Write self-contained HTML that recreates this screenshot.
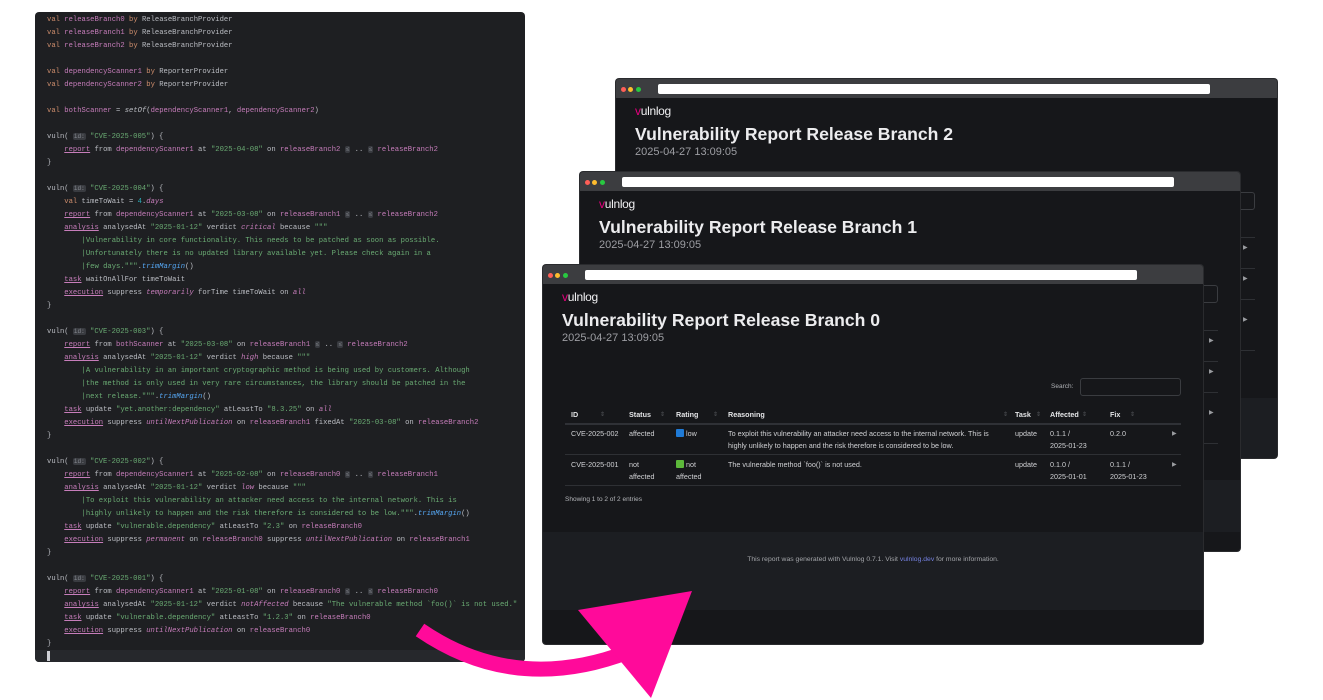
<!DOCTYPE html>
<html><head><meta charset="utf-8">
<style>
*{margin:0;padding:0;box-sizing:border-box}
body{width:1323px;height:700px;background:#fff;position:relative;overflow:hidden;font-family:"Liberation Sans",sans-serif}
.code{position:absolute;left:35px;top:12px;width:490px;height:650px;background:#1e1f22;border-radius:4px;overflow:hidden}
.code pre{position:absolute;left:12px;top:2px;font-family:"Liberation Mono",monospace;font-size:7.2px;line-height:13px;color:#bcbec4;white-space:pre}
.k{color:#cf8e6d}.p{color:#c77dbb}.s{color:#6aab73}.n{color:#2aacb8}.f{color:#56a8f5;font-style:italic}.i{font-style:italic}.pi{color:#c77dbb;font-style:italic}
.u{text-decoration:underline;color:#c77dbb}
.h{background:#393b40;color:#868a91;border-radius:2px;padding:0 1px;font-size:6px;line-height:0}
.sb{position:absolute;left:0;bottom:0;width:100%;height:12px;background:#26282c}
.cur{position:absolute;left:12px;bottom:1px;width:3px;height:10px;background:#ced0d6}
.win{position:absolute;width:660px;height:379px;background:#16171a;border-radius:3px;overflow:hidden;box-shadow:0 0 0 1px #2a2b2e}
.tb{position:absolute;left:0;top:0;width:100%;height:19px;background:#3c3d40}
.dot{position:absolute;top:8px;width:5px;height:5px;border-radius:50%}
.url{position:absolute;left:42px;top:5px;width:552px;height:10px;background:#fff;border-radius:2px}
.logo{position:absolute;left:19px;top:25px;font-size:12px;color:#f0f0f2;letter-spacing:-0.3px}
.logo b{color:#e6007e;font-weight:normal}
.ttl{position:absolute;left:19px;top:45px;font-size:17.6px;font-weight:bold;color:#ececee;white-space:nowrap}
.dt{position:absolute;left:19px;top:67px;font-size:11px;color:#9d9ea3}
.sl{position:absolute;left:508px;top:118px;font-size:6.5px;color:#b0b2b6}
.si{position:absolute;left:537px;top:113px;width:101px;height:18px;border:1px solid #3a3c40;border-radius:3px}
.t{position:absolute;font-size:7.2px;color:#d0d1d4;line-height:11.5px;white-space:nowrap}
.th{font-weight:bold;color:#e4e5e7}
.ln{position:absolute;left:22px;width:616px;height:1px;background:#2e3034}
.ar{position:absolute;left:629px;font-size:6px;color:#9a9ca0}
.sq{display:inline-block;width:8px;height:8px;vertical-align:-1px;margin-right:2px;border-radius:1px}
.so{position:absolute;font-size:6px;color:#55575c}
.ft{position:absolute;left:0;width:100%;background:#1c1e22}
.ftx{position:absolute;left:0;width:100%;text-align:center;font-size:6.8px;color:#a3a5a9}
.ftx a{color:#7480e0;text-decoration:none}
</style></head><body>

<div class="code"><pre><span class="k">val</span> <span class="p">releaseBranch0</span> <span class="k">by</span> ReleaseBranchProvider
<span class="k">val</span> <span class="p">releaseBranch1</span> <span class="k">by</span> ReleaseBranchProvider
<span class="k">val</span> <span class="p">releaseBranch2</span> <span class="k">by</span> ReleaseBranchProvider

<span class="k">val</span> <span class="p">dependencyScanner1</span> <span class="k">by</span> ReporterProvider
<span class="k">val</span> <span class="p">dependencyScanner2</span> <span class="k">by</span> ReporterProvider

<span class="k">val</span> <span class="p">bothScanner</span> = <span class="i">setOf</span>(<span class="p">dependencyScanner1</span>, <span class="p">dependencyScanner2</span>)

vuln( <span class="h">id:</span> <span class="s">"CVE-2025-005"</span>) {
    <span class="u">report</span> from <span class="p">dependencyScanner1</span> at <span class="s">"2025-04-08"</span> on <span class="p">releaseBranch2</span> <span class="h">≤</span> .. <span class="h">≤</span> <span class="p">releaseBranch2</span>
}

vuln( <span class="h">id:</span> <span class="s">"CVE-2025-004"</span>) {
    <span class="k">val</span> timeToWait = <span class="n">4</span>.<span class="pi">days</span>
    <span class="u">report</span> from <span class="p">dependencyScanner1</span> at <span class="s">"2025-03-08"</span> on <span class="p">releaseBranch1</span> <span class="h">≤</span> .. <span class="h">≤</span> <span class="p">releaseBranch2</span>
    <span class="u">analysis</span> analysedAt <span class="s">"2025-01-12"</span> verdict <span class="pi">critical</span> because <span class="s">"""</span>
<span class="s">        |Vulnerability in core functionality. This needs to be patched as soon as possible.</span>
<span class="s">        |Unfortunately there is no updated library available yet. Please check again in a</span>
<span class="s">        |few days."""</span>.<span class="f">trimMargin</span>()
    <span class="u">task</span> waitOnAllFor timeToWait
    <span class="u">execution</span> suppress <span class="pi">temporarily</span> forTime timeToWait on <span class="pi">all</span>
}

vuln( <span class="h">id:</span> <span class="s">"CVE-2025-003"</span>) {
    <span class="u">report</span> from <span class="p">bothScanner</span> at <span class="s">"2025-03-08"</span> on <span class="p">releaseBranch1</span> <span class="h">≤</span> .. <span class="h">≤</span> <span class="p">releaseBranch2</span>
    <span class="u">analysis</span> analysedAt <span class="s">"2025-01-12"</span> verdict <span class="pi">high</span> because <span class="s">"""</span>
<span class="s">        |A vulnerability in an important cryptographic method is being used by customers. Although</span>
<span class="s">        |the method is only used in very rare circumstances, the library should be patched in the</span>
<span class="s">        |next release."""</span>.<span class="f">trimMargin</span>()
    <span class="u">task</span> update <span class="s">"yet.another:dependency"</span> atLeastTo <span class="s">"8.3.25"</span> on <span class="pi">all</span>
    <span class="u">execution</span> suppress <span class="pi">untilNextPublication</span> on <span class="p">releaseBranch1</span> fixedAt <span class="s">"2025-03-08"</span> on <span class="p">releaseBranch2</span>
}

vuln( <span class="h">id:</span> <span class="s">"CVE-2025-002"</span>) {
    <span class="u">report</span> from <span class="p">dependencyScanner1</span> at <span class="s">"2025-02-08"</span> on <span class="p">releaseBranch0</span> <span class="h">≤</span> .. <span class="h">≤</span> <span class="p">releaseBranch1</span>
    <span class="u">analysis</span> analysedAt <span class="s">"2025-01-12"</span> verdict <span class="pi">low</span> because <span class="s">"""</span>
<span class="s">        |To exploit this vulnerability an attacker need access to the internal network. This is</span>
<span class="s">        |highly unlikely to happen and the risk therefore is considered to be low."""</span>.<span class="f">trimMargin</span>()
    <span class="u">task</span> update <span class="s">"vulnerable.dependency"</span> atLeastTo <span class="s">"2.3"</span> on <span class="p">releaseBranch0</span>
    <span class="u">execution</span> suppress <span class="pi">permanent</span> on <span class="p">releaseBranch0</span> suppress <span class="pi">untilNextPublication</span> on <span class="p">releaseBranch1</span>
}

vuln( <span class="h">id:</span> <span class="s">"CVE-2025-001"</span>) {
    <span class="u">report</span> from <span class="p">dependencyScanner1</span> at <span class="s">"2025-01-08"</span> on <span class="p">releaseBranch0</span> <span class="h">≤</span> .. <span class="h">≤</span> <span class="p">releaseBranch0</span>
    <span class="u">analysis</span> analysedAt <span class="s">"2025-01-12"</span> verdict <span class="pi">notAffected</span> because <span class="s">"The vulnerable method `foo()` is not used."</span>
    <span class="u">task</span> update <span class="s">"vulnerable.dependency"</span> atLeastTo <span class="s">"1.2.3"</span> on <span class="p">releaseBranch0</span>
    <span class="u">execution</span> suppress <span class="pi">untilNextPublication</span> on <span class="p">releaseBranch0</span>
}</pre><div class="sb"></div><div class="cur"></div></div>

<!-- Window 2 -->
<div class="win" style="left:616px;top:79px;width:661px">
<div class="tb"></div><div class="dot" style="left:5px;background:#ff5f57"></div><div class="dot" style="left:12px;background:#febc2e"></div><div class="dot" style="left:20px;background:#28c840"></div><div class="url"></div>
<div class="logo"><b>v</b>ulnlog</div>
<div class="ttl">Vulnerability Report Release Branch 2</div>
<div class="dt">2025-04-27 13:09:05</div>
<div class="si" style="left:538px"></div>
<div class="ln" style="top:158px;height:1px;left:23px"></div>
<div class="ln" style="top:189px;left:23px"></div>
<div class="ln" style="top:220px;left:23px"></div>
<div class="ln" style="top:271px;left:23px"></div>
<div class="ar" style="top:165px;left:627px">▶</div>
<div class="ar" style="top:196px;left:627px">▶</div>
<div class="ar" style="top:237px;left:627px">▶</div>
<div class="ft" style="top:319px;height:60px"></div>
</div>

<!-- Window 1 -->
<div class="win" style="left:580px;top:172px">
<div class="tb"></div><div class="dot" style="left:5px;background:#ff5f57"></div><div class="dot" style="left:12px;background:#febc2e"></div><div class="dot" style="left:20px;background:#28c840"></div><div class="url"></div>
<div class="logo"><b>v</b>ulnlog</div>
<div class="ttl">Vulnerability Report Release Branch 1</div>
<div class="dt">2025-04-27 13:09:05</div>
<div class="si"></div>
<div class="ln" style="top:158px"></div>
<div class="ln" style="top:189px"></div>
<div class="ln" style="top:220px"></div>
<div class="ln" style="top:271px"></div>
<div class="ar" style="top:165px">▶</div>
<div class="ar" style="top:196px">▶</div>
<div class="ar" style="top:237px">▶</div>
<div class="ft" style="top:308px;height:52px"></div>
</div>

<!-- Window 0 -->
<div class="win" style="left:543px;top:265px">
<div class="tb"></div><div class="dot" style="left:5px;background:#ff5f57"></div><div class="dot" style="left:12px;background:#febc2e"></div><div class="dot" style="left:20px;background:#28c840"></div><div class="url"></div>
<div class="logo"><b>v</b>ulnlog</div>
<div class="ttl">Vulnerability Report Release Branch 0</div>
<div class="dt">2025-04-27 13:09:05</div>
<div class="sl">Search:</div>
<div class="si"></div>
<div class="t th" style="left:28px;top:144px">ID</div>
<div class="t th" style="left:86px;top:144px">Status</div>
<div class="t th" style="left:133px;top:144px">Rating</div>
<div class="t th" style="left:185px;top:144px">Reasoning</div>
<div class="t th" style="left:472px;top:144px">Task</div>
<div class="t th" style="left:507px;top:144px">Affected</div>
<div class="t th" style="left:567px;top:144px">Fix</div>
<div class="so" style="left:57px;top:146px">⇕</div>
<div class="so" style="left:117px;top:146px">⇕</div>
<div class="so" style="left:170px;top:146px">⇕</div>
<div class="so" style="left:460px;top:146px">⇕</div>
<div class="so" style="left:493px;top:146px">⇕</div>
<div class="so" style="left:539px;top:146px">⇕</div>
<div class="so" style="left:587px;top:146px">⇕</div>
<div class="ln" style="top:158px;height:2px;background:#2f3136"></div>
<div class="t" style="left:28px;top:163px">CVE-2025-002</div>
<div class="t" style="left:86px;top:163px">affected</div>
<div class="t" style="left:133px;top:163px"><span class="sq" style="background:#1f7ad6"></span>low</div>
<div class="t" style="left:185px;top:163px">To exploit this vulnerability an attacker need access to the internal network. This is<br>highly unlikely to happen and the risk therefore is considered to be low.</div>
<div class="t" style="left:472px;top:163px">update</div>
<div class="t" style="left:507px;top:163px">0.1.1 /<br>2025-01-23</div>
<div class="t" style="left:567px;top:163px">0.2.0</div>
<div class="ar" style="top:165px">▶</div>
<div class="ln" style="top:189px"></div>
<div class="t" style="left:28px;top:194px">CVE-2025-001</div>
<div class="t" style="left:86px;top:194px">not<br>affected</div>
<div class="t" style="left:133px;top:194px"><span class="sq" style="background:#5cb83a"></span>not<br>affected</div>
<div class="t" style="left:185px;top:194px">The vulnerable method `foo()` is not used.</div>
<div class="t" style="left:472px;top:194px">update</div>
<div class="t" style="left:507px;top:194px">0.1.0 /<br>2025-01-01</div>
<div class="t" style="left:567px;top:194px">0.1.1 /<br>2025-01-23</div>
<div class="ar" style="top:196px">▶</div>
<div class="ln" style="top:220px"></div>
<div class="t" style="left:22px;top:229px;font-size:6.5px;color:#b4b6ba">Showing 1 to 2 of 2 entries</div>
<div class="ft" style="top:267px;height:78px"></div>
<div class="ftx" style="top:291px">This report was generated with Vulnlog 0.7.1. Visit <a>vulnlog.dev</a> for more information.</div>
</div>

<svg style="position:absolute;left:0;top:0" width="1323" height="700">
<path d="M420,630 Q515,695 628,652" fill="none" stroke="#ff0a9a" stroke-width="15"/>
<polygon points="578,610 692,591 651,698" fill="#ff0a9a"/>
</svg>
</body></html>
